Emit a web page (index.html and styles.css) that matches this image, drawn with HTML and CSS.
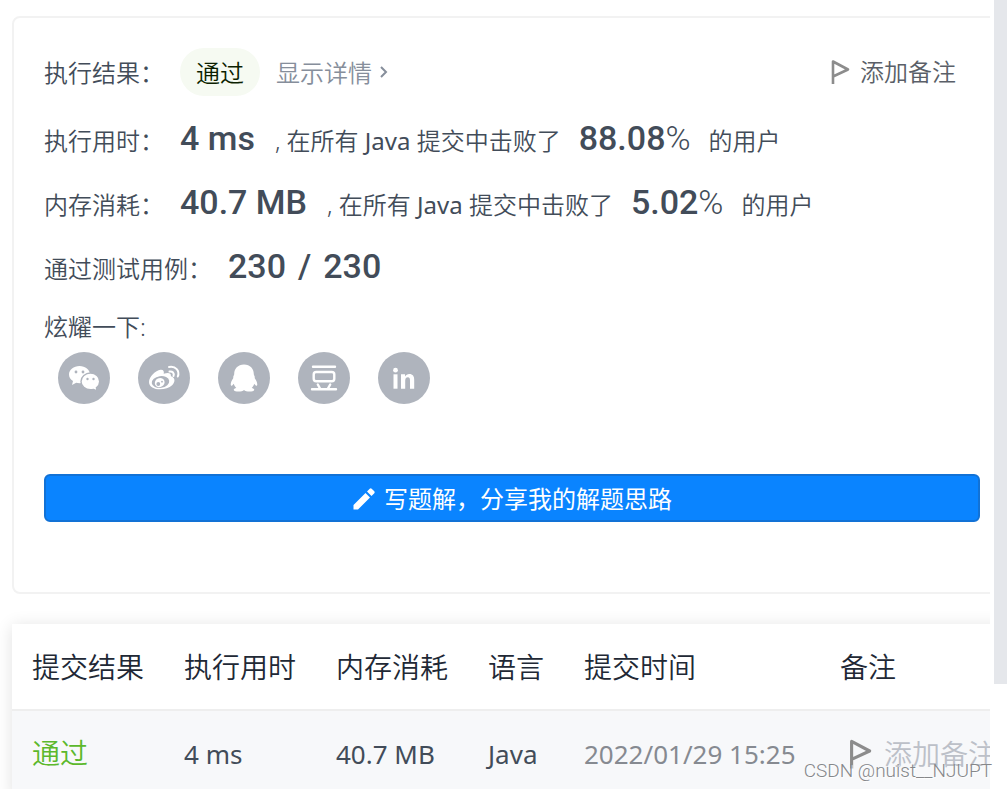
FILE: index.html
```html
<!DOCTYPE html>
<html lang="zh-CN">
<head>
<meta charset="utf-8">
<title>执行结果</title>
<link rel="stylesheet" href="styles.css">
</head>
<body>
<svg class="defs" width="0" height="0" aria-hidden="true">
  <symbol id="flag" viewBox="0 0 20 26"><path d="M3 25V2.500L18 10.500L3 17.500" fill="none" stroke="currentColor" stroke-width="2.600" stroke-linejoin="round"/></symbol>
</svg>
<main class="main">
  <section class="card">
    <div class="row result">
      <span class="label">执行结果：</span>
      <span class="pill">通过</span>
      <a class="detail" href="#">显示详情
        <svg width="8" height="14" viewBox="0 0 8 14"><path d="M1 1L6 6L1 11" fill="none" stroke="currentColor" stroke-width="2"/></svg>
      </a>
      <button class="note" type="button"><svg width="20" height="26"><use href="#flag"/></svg>添加备注</button>
    </div>
    <div class="row stat">
      <span class="label">执行用时：</span><strong class="num">4 ms</strong><span class="text lead">, 在所有 <span class="latin">Java</span> 提交中击败了</span><strong class="num">88.08<span class="thin">%</span></strong><span class="text tail">的用户</span>
    </div>
    <div class="row stat">
      <span class="label">内存消耗：</span><strong class="num">40.7 MB</strong><span class="text lead">, 在所有 <span class="latin">Java</span> 提交中击败了</span><strong class="num">5.02<span class="thin">%</span></strong><span class="text tail">的用户</span>
    </div>
    <div class="row stat">
      <span class="label wide">通过测试用例：</span><strong class="num cases"><span>230</span><span>/</span><span>230</span></strong>
    </div>
    <div class="share-label">炫耀一下:</div>
    <div class="share">
      <a class="social" href="#" aria-label="微信"><svg width="52" height="52" viewBox="0 0 52 52">
        <path fill="#fff" d="M21.500 14C15.700 14 11 17.800 11 22.500c0 2.700 1.500 5 4 6.600L14 33l4.200-2.200c1.100.300 2.200.4 3.300.4c5.800 0 10.500-3.900 10.500-8.700S27.300 14 21.500 14z"/>
        <path fill="#fff" stroke="#afb4bd" stroke-width="1.400" d="M32.500 21C27.400 21 23 24.700 23 29.400s4.200 8.400 9.500 8.400c1 0 2-.1 3-.4L39.300 39l-.9-3.200c2-1.600 3.300-3.900 3.300-6.400C41.700 24.700 37.600 21 32.500 21z"/>
        <g fill="#afb4bd"><circle cx="18" cy="20" r="1.400"/><circle cx="25" cy="20" r="1.400"/><circle cx="29.500" cy="27" r="1.200"/><circle cx="35.500" cy="27" r="1.200"/></g></svg></a>
      <a class="social" href="#" aria-label="微博"><svg width="52" height="52" viewBox="0 0 52 52">
        <path fill="#fff" d="M11 30c0-5 6.500-11.600 11.500-12.200c3-.3 3.800 1.600 3.200 4c4-1.600 7.700-1.300 7.200 2.400c4.500 1.200 4.600 5.600 1.200 9C28 39.300 11 39 11 30z"/>
        <ellipse cx="22.500" cy="30" rx="8.800" ry="5.900" transform="rotate(-8 22.500 30)" fill="#afb4bd"/>
        <ellipse cx="21.700" cy="30.600" rx="5" ry="4.400" transform="rotate(-25 21.700 30.600)" fill="#fff"/>
        <circle cx="20.300" cy="32" r="1.900" fill="#afb4bd"/><circle cx="24" cy="29.700" r=".9" fill="#afb4bd"/>
        <path d="M31.500 19.500c3-.5 5 1.600 4 4.500M31 15c6.600-1.400 11 4 8.800 9.500" fill="none" stroke="#fff" stroke-width="2" stroke-linecap="round"/></svg></a>
      <a class="social" href="#" aria-label="QQ"><svg width="52" height="52" viewBox="0 0 52 52">
        <path fill="#fff" d="M26 12.500c-6.200 0-9.800 4.300-9.800 9.500c0 1-.6 1.600-.9 2.600c-.1.600.1 1.200-.2 1.800c-1.700 2.100-2.600 4.600-2.300 6.700c.2 1.300 1.700.5 3-1.400c.4 1.700 1.300 3.100 2.500 4.200c-1.700.5-2.800 1.200-2.500 2.100c.6 2 8.200 2.200 10.200 0c2 2.200 9.600 2 10.200 0c.3-.9-.8-1.600-2.500-2.100c1.200-1.100 2.100-2.500 2.500-4.200c1.300 1.900 2.800 2.700 3 1.400c.3-2.100-.6-4.600-2.300-6.700c-.3-.6-.1-1.200-.2-1.800c-.3-1-.9-1.600-.9-2.600c0-5.200-3.600-9.500-9.800-9.500z"/></svg></a>
      <a class="social" href="#" aria-label="豆瓣"><svg width="52" height="52" viewBox="0 0 52 52">
        <g fill="none" stroke="#fff" stroke-width="2.400" stroke-linecap="round"><path d="M15 14.700H37M14 37.300H38M19.800 32.500l2.200 4M32.200 32.500L30 36.500"/><rect x="15.700" y="20" width="20.600" height="9.200" rx="2.500"/></g></svg></a>
      <a class="social" href="#" aria-label="领英"><svg width="52" height="52" viewBox="0 0 52 52">
        <circle cx="17.500" cy="18.200" r="2.400" fill="#fff"/><rect x="15.500" y="22.300" width="4" height="14.400" fill="#fff"/>
        <path fill="#fff" d="M23 22.300h4v2.100c1-1.500 2.400-2.400 4.300-2.400c3.500 0 4.900 2.300 4.900 5.700v9H32v-8.300c0-2-.6-3.100-2.100-3.100c-1.700 0-2.700 1.200-2.700 3.300v8.100H23z"/></svg></a>
    </div>
    <button class="primary" type="button"><svg width="24" height="24" viewBox="0 0 24 24"><path fill="#fff" d="M1.500 18V22.500H6L18 10.500L13.500 6zM15 4.500L17.700 1.700q1-.9 2 0L22.300 4.300q.9 1 0 2L19.500 9z"/></svg>写题解，分享我的解题思路</button>
  </section>
  <table class="records">
    <colgroup><col class="c-result"><col class="c-time"><col class="c-memory"><col class="c-lang"><col class="c-date"><col></colgroup>
    <thead><tr><th>提交结果</th><th>执行用时</th><th>内存消耗</th><th>语言</th><th>提交时间</th><th>备注</th></tr></thead>
    <tbody><tr><td><a class="pass" href="#">通过</a></td><td>4 ms</td><td>40.7 MB</td><td>Java</td><td class="date">2022/01/29 15:25</td><td><button class="note faded" type="button"><svg width="24" height="32"><use href="#flag"/></svg>添加备注</button></td></tr></tbody>
  </table>
</main>
<div class="scrollbar"></div>
<div class="watermark">CSDN @nuist__NJUPT</div>
</body>
</html>
```
FILE: styles.css
```css
* { box-sizing: border-box; }
body {
  margin: 0;
  height: 100vh;
  display: flex;
  gap: 4px;
  overflow: hidden;
  position: relative;
  background: #fff;
  color: #424c59;
  font: 350 24px/48px "Noto Sans", "Noto Sans CJK SC", sans-serif;
}
a { text-decoration: none; color: inherit; }
button { font: inherit; color: inherit; border: 0; background: none; padding: 0; cursor: pointer; white-space: nowrap; }
svg { flex: none; }
.defs { position: absolute; }
.main { flex: 1; min-width: 0; overflow: hidden; padding: 16px 0 0 12px; }
.scrollbar { width: 13px; height: calc(100vh - 105px); background: #e5e7eb; }

.card { margin-right: -22px; border: 2px solid #f2f2f2; border-radius: 8px; padding: 30px 30px 70px; }
.row { display: flex; white-space: nowrap; }
.result { height: 48px; align-items: flex-start; margin-bottom: 10px; padding-right: 24px; line-height: 50px; }
.label { width: 136px; }
.label.wide { width: 184px; }
.pill { height: 48px; padding: 0 16px; border-radius: 24px; background: #f6faf2; color: #0c1f00; margin-right: 16px; }
.detail { display: flex; align-items: center; gap: 8px; color: #868e9b; }
.note { display: flex; align-items: center; gap: 10px; }
.note svg { color: #8c8c8c; }
.result .note { height: 48px; margin-left: auto; color: #5a5f68; }
.stat { height: 64px; align-items: baseline; line-height: 64px; }
.num { font-family: Roboto, sans-serif; font-size: 34px; font-weight: 500; }
.latin { font-weight: 400; }
.thin { font-weight: 300; }
.lead { margin: 0 18px 0 20px; }
.tail { margin-left: 18px; }
.cases { display: flex; gap: 12px; }
.share-label { margin-top: 5px; }
.share { display: flex; gap: 28px; padding: 1px 14px 70px; }
.social { width: 52px; height: 52px; border-radius: 50%; background: #afb4bd; }
.social svg { display: block; }
.primary {
  width: 100%; height: 48px; display: flex; align-items: center; justify-content: center; gap: 8px;
  padding-top: 2px;
  border: 2px solid #1272d6; border-radius: 6px; background: #0a84ff; color: #fff; font-weight: 400;
}

.records {
  width: calc(100% + 22px); margin-top: 30px; table-layout: fixed; border-collapse: collapse;
  box-shadow: 0 2px 16px rgba(0, 0, 0, 0.12); font-size: 28px; background: #fff;
}
.c-result, .c-time, .c-memory { width: 152px; }
.c-lang { width: 96px; }
.c-date { width: 256px; }
.records th, .records td { height: 86px; padding: 0 0 0 20px; text-align: left; white-space: nowrap; font-weight: 350; }
.records th { color: #212835; border-bottom: 2px solid #eee; }
.records td { background: #f7f8fa; font-size: 26px; font-weight: 400; }
.records .date { color: #868a91; }
.records .pass { color: #5cb82c; font-size: 28px; font-weight: 350; }
.records .faded { color: #bcc0c8; font-size: 28px; font-weight: 350; padding-left: 8px; gap: 12px; }
.watermark {
  position: absolute; right: 15px; bottom: 6px; color: #85878a;
  font: 300 19px/24px Roboto, sans-serif; text-shadow: 1px 1px 1px #fff;
}
```
